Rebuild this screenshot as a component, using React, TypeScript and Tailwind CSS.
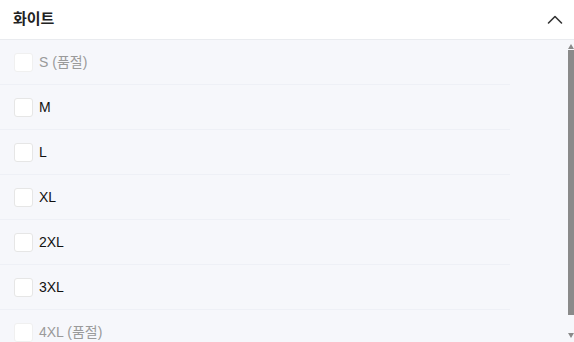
import React from "react";

const items = [
  { label: "S (품절)", disabled: true },
  { label: "M" },
  { label: "L" },
  { label: "XL" },
  { label: "2XL" },
  { label: "3XL" },
  { label: "4XL (품절)", disabled: true },
];

export default function App() {
  return (
    <div
      className="w-[574px] h-[342px] overflow-hidden bg-white relative"
      style={{ fontFamily: "'Liberation Sans', 'Noto Sans CJK KR', sans-serif" }}
    >
      <div className="h-[40px] flex items-center justify-between pl-[13px] pr-[10px] border-b border-[#e9ebef]">
        <span className="text-[15px] font-bold text-[#222]">화이트</span>
        <svg width="18" height="18" viewBox="0 0 18 18" fill="none">
          <path d="M2.5 12L9 5.5L15.5 12" stroke="#333" strokeWidth="1.6" strokeLinecap="round" strokeLinejoin="round" />
        </svg>
      </div>
      <div className="bg-[#f6f7fb] h-[302px]">
        {items.map((it, i) => (
          <div
            key={i}
            className={`h-[45px] mr-[64px] flex items-center pl-[14px] ${i < items.length - 1 ? "border-b border-[#eef0f6]" : ""}`}
          >
            <div
              className={`w-[19px] h-[19px] rounded-[3px] bg-white border ${it.disabled ? "border-[#f0f0f0]" : "border-[#e6e6e6]"}`}
            />
            <span className={`ml-[6px] text-[14px] ${it.disabled ? "text-[#9a9a9a]" : "text-[#111]"}`}>
              {it.label}
            </span>
          </div>
        ))}
      </div>
      <div className="absolute right-0 top-[40px] bottom-0 w-[6px] flex flex-col items-center">
        <svg width="6" height="5" viewBox="0 0 6 5" className="mt-[4px]">
          <path d="M3 0L6 5H0Z" fill="#8a8a8a" />
        </svg>
        <div className="mt-[1px] w-[6px] h-[265px] bg-[#8a8a8a]" />
        <div className="flex-1" />
        <svg width="6" height="5" viewBox="0 0 6 5" className="mb-[4px]">
          <path d="M0 0H6L3 5Z" fill="#8a8a8a" />
        </svg>
      </div>
    </div>
  );
}
